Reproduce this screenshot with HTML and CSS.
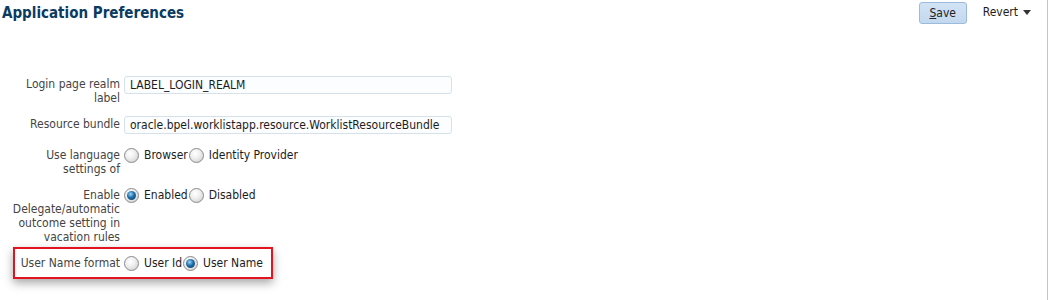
FILE: index.html
```html
<!DOCTYPE html>
<html>
<head>
<meta charset="utf-8">
<link rel="stylesheet" href="styles.css">
</head>
<body>
<div class="page">
  <div class="header">
    <h1 class="title">Application Preferences</h1>
    <div class="actions">
      <button class="save"><u>S</u>ave</button>
      <span class="revert">Revert <span class="caret"></span></span>
    </div>
  </div>
  <div class="form">
    <div class="row r1">
      <div class="label">Login page realm label</div>
      <div class="control"><div class="input">LABEL_LOGIN_REALM</div></div>
    </div>
    <div class="row r2">
      <div class="label">Resource bundle</div>
      <div class="control"><div class="input">oracle.bpel.worklistapp.resource.WorklistResourceBundle</div></div>
    </div>
    <div class="row r3">
      <div class="label">Use language settings of</div>
      <div class="control radios">
        <span class="radio"></span><span class="rlabel">Browser</span>
        <span class="radio"></span><span class="rlabel">Identity Provider</span>
      </div>
    </div>
    <div class="row r4">
      <div class="label">Enable Delegate/automatic outcome setting in vacation rules</div>
      <div class="control radios">
        <span class="radio checked"></span><span class="rlabel">Enabled</span>
        <span class="radio"></span><span class="rlabel">Disabled</span>
      </div>
    </div>
    <div class="row r5">
      <div class="label">User Name format</div>
      <div class="control radios">
        <span class="radio"></span><span class="rlabel">User Id</span>
        <span class="radio checked"></span><span class="rlabel">User Name</span>
      </div>
    </div>
  </div>
</div>
</body>
</html>
```
FILE: styles.css
```css
html, body { margin: 0; padding: 0; background: #fff; }
body { font-family: Tahoma, "DejaVu Sans Condensed", "DejaVu Sans", sans-serif; font-size: 12px; color: #333; }
.page { width: 1048px; height: 300px; border-right: 1px solid #c4c4c4; box-sizing: border-box; }
.header { display: flex; justify-content: space-between; align-items: flex-start; height: 58px; }
.title { margin: 0; padding: 4px 0 0 2px; font-size: 15px; font-weight: bold; color: #0b3b60; line-height: 18px; }
.actions { display: flex; align-items: flex-start; padding-top: 2px; }
.save { font-family: inherit; font-size: 12px; color: #222; width: 48px; height: 22px; padding: 0; background: linear-gradient(#d2e3f5, #c3d8ef); border: 1px solid #9bbbdc; border-radius: 3px; }
.save u { text-decoration: underline; }
.revert { margin-left: 16px; margin-right: 16px; padding-top: 3px; color: #1c1c1c; display: flex; align-items: center; }
.caret { display: inline-block; width: 0; height: 0; border-left: 4px solid transparent; border-right: 4px solid transparent; border-top: 5px solid #333; margin-left: 5px; margin-top: 1px; }
.form { padding-top: 18px; }
.row { display: flex; align-items: flex-start; }
.label { width: 120px; flex: none; box-sizing: border-box; text-align: right; line-height: 14px; color: #444; padding-left: 6px; }
.control { margin-left: 4px; }
.input { width: 328px; height: 18px; box-sizing: border-box; border: 1px solid #d7e1ea; border-radius: 3px; background: #fbfdff; line-height: 16px; padding-left: 5px; color: #1c1c1c; }
.r1 { height: 40px; }
.r1 .label { padding-left: 20px; }
.r2 { height: 32px; }
.r1 .label, .r2 .label { padding-top: 1px; }
.r3 { height: 40px; }
.r3 .label { padding-left: 30px; }
.r4 { height: 59px; }
.radios { display: flex; align-items: center; height: 14px; }
.radio { width: 15px; height: 15px; box-sizing: border-box; border-radius: 50%; border: 1px solid #8a8a8a; background: radial-gradient(circle at 40% 35%, #ffffff 0%, #f0f0f0 40%, #c8c8c8 100%); position: relative; flex: none; }
.radio.checked::after { content: ""; position: absolute; left: 2px; top: 2px; width: 9px; height: 9px; border-radius: 50%; background: radial-gradient(circle at 40% 35%, #9ad6f7 0%, #1d6ca6 45%, #08365c 100%); }
.rlabel { margin-left: 5px; margin-right: 1px; color: #1c1c1c; line-height: 14px; }
.r5 { margin-left: 13px; width: 260px; height: 32px; box-sizing: border-box; border: 2px solid #e3141f; box-shadow: 0 4px 9px rgba(0,0,0,0.35); align-items: center; }
.r5 .label { width: 105px; padding-left: 0; }
```
